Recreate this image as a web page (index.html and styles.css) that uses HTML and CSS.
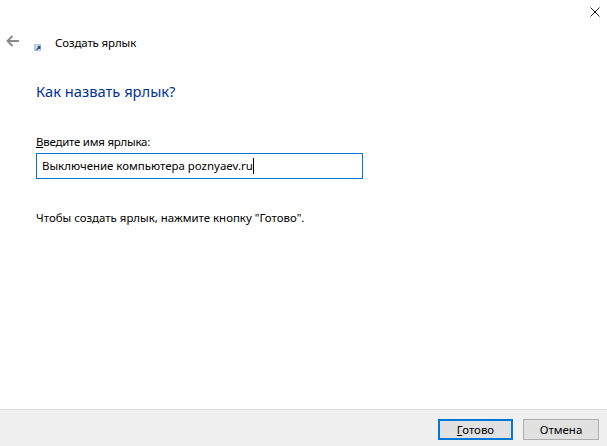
FILE: index.html
```html
<!DOCTYPE html>
<html lang="ru">
<head>
<meta charset="utf-8">
<title>Создать ярлык</title>
<link rel="stylesheet" href="styles.css">
</head>
<body>
<div class="window">
  <div class="titlebar">
    <svg class="close" width="10" height="10" viewBox="0 0 10 10"><path d="M.5.5l9 9M9.5.5l-9 9" stroke="#1a1a1a" stroke-width="1" fill="none"/></svg>
  </div>
  <div class="nav">
    <svg class="back" width="13" height="12" viewBox="0 0 13 12"><path d="M6.5 1L1.5 6l5 5M1.5 6H13" stroke="#8a8a8a" stroke-width="2" fill="none"/></svg>
    <svg class="app-icon" width="7" height="7" viewBox="0 0 7 7"><rect width="7" height="7" fill="#b9c6dc"/><rect x="2" y="1" width="4" height="5" fill="#e8eef8"/><path d="M2.5 6L5 3.2M3.5 2.5H5.8V5" stroke="#1f4f9e" stroke-width="1.3" fill="none"/></svg>
    <span class="nav-title">Создать ярлык</span>
  </div>
  <main class="content">
    <h1 class="heading">Как назвать ярлык?</h1>
    <label class="label"><u>В</u>ведите имя ярлыка:</label>
    <div class="field"><span>Выключение компьютера poznyaev.ru</span><i class="caret"></i></div>
    <p class="hint">Чтобы создать ярлык, нажмите кнопку "Готово".</p>
  </main>
  <footer class="footer">
    <button class="btn btn-default"><u>Г</u>отово</button>
    <button class="btn">Отмена</button>
  </footer>
</div>
</body>
</html>
```
FILE: styles.css
```css
* { box-sizing: border-box; }
html, body { margin: 0; height: 100%; }
body { background: #fff; color: #000; font-family: "Noto Sans", sans-serif; font-size: 11.45px; overflow: hidden; }
.window { height: 446px; display: flex; flex-direction: column; }
.titlebar { height: 8px; display: flex; justify-content: flex-end; padding-right: 7px; }
.close { flex: none; margin-top: 7px; }
.nav { height: 22px; margin-top: 24px; display: flex; align-items: center; padding-left: 6px; line-height: 16px; }
.back { flex: none; margin-top: -4px; }
.app-icon { flex: none; margin-left: 15px; margin-top: 9px; }
.nav-title { margin-left: 14px; letter-spacing: -0.1px; }
.content { flex: 1; padding: 27px 0 0 36px; }
.heading { margin: 0; font-size: 14.7px; line-height: 20px; font-weight: 400; color: #003399; }
.label { display: block; letter-spacing: -0.22px; margin-top: 33px; line-height: 16px; }
.field { margin-top: 3px; width: 327px; height: 26px; border: 1px solid #0078d7; padding-left: 5px; display: flex; align-items: center; line-height: 16px; }
.caret { width: 1px; height: 16px; background: #000; }
.hint { margin: 31px 0 0; line-height: 16px; }
.footer { height: 37px; background: #f0f0f0; border-top: 1px solid #dfdfdf; display: flex; justify-content: flex-end; align-items: flex-start; gap: 10px; padding: 9px 8px 0 0; }
.btn { width: 76px; height: 21px; padding: 0; border: 1px solid #adadad; background: #e1e1e1; font: inherit; line-height: 16px; color: #000; }
.btn-default { width: 75px; border: 2px solid #0078d7; }
```
